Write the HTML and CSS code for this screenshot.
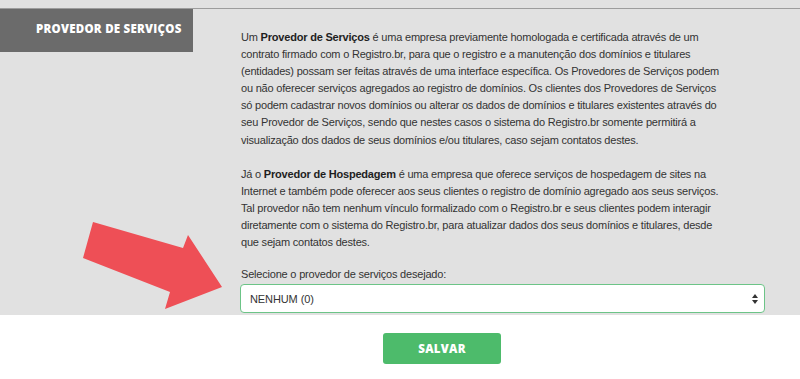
FILE: index.html
```html
<!DOCTYPE html>
<html lang="pt-BR">
<head>
<meta charset="utf-8">
<title>Provedor de Serviços</title>
<link rel="stylesheet" href="styles.css">
</head>
<body>
<div class="panel">
  <div class="panel-inner">
    <div class="tab">PROVEDOR DE SERVIÇOS</div>
    <div class="content">
      <p>Um <b>Provedor de Serviços</b> é uma empresa previamente homologada e certificada através de um contrato firmado com o Registro.br, para que o registro e a manutenção dos domínios e titulares (entidades) possam ser feitas através de uma interface específica. Os Provedores de Serviços podem ou não oferecer serviços agregados ao registro de domínios. Os clientes dos Provedores de Serviços só podem cadastrar novos domínios ou alterar os dados de domínios e titulares existentes através do seu Provedor de Serviços, sendo que nestes casos o sistema do Registro.br somente permitirá a visualização dos dados de seus domínios e/ou titulares, caso sejam contatos destes.</p>
      <p>Já o <b>Provedor de Hospedagem</b> é uma empresa que oferece serviços de hospedagem de sites na Internet e também pode oferecer aos seus clientes o registro de domínio agregado aos seus serviços. Tal provedor não tem nenhum vínculo formalizado com o Registro.br e seus clientes podem interagir diretamente com o sistema do Registro.br, para atualizar dados dos seus domínios e titulares, desde que sejam contatos destes.</p>
      <div class="label">Selecione o provedor de serviços desejado:</div>
      <div class="select">
        <span>NENHUM (0)</span>
        <svg class="caret" width="6" height="10" viewBox="0 0 6 10"><polygon points="3,0 6,4 0,4" fill="#333"/><polygon points="0,6 6,6 3,10" fill="#333"/></svg>
      </div>
    </div>
  </div>
  <svg class="arrow" width="145" height="92" viewBox="0 0 145 92"><polygon points="13,2 103,28 108,15 142,67 85,89 90,72 3,38" fill="#ee4f56"/></svg>
</div>
<div class="actions"><button class="btn">SALVAR</button></div>
</body>
</html>
```
FILE: styles.css
```css
html, body { margin: 0; padding: 0; background: #fff; }
body { font-family: "Liberation Sans", Arial, sans-serif; color: #333; }
.panel { position: relative; background: #e1e1e1; padding: 8px 0 2px 0; }
.panel-inner { display: flex; align-items: flex-start; border-top: 1px solid #9c9c9c; }
.tab {
  width: 193px; height: 43px; box-sizing: border-box; flex: none;
  background: #6b6b6b; color: #fff;
  font-family: "Open Sans", sans-serif; font-weight: 800; font-size: 11.5px;
  padding: 12px 0 0 36px; line-height: 16px; letter-spacing: 0.25px;
}
.content { margin-left: 47px; width: 525px; padding-top: 20px; }
.content p { margin: 0 0 17px 1px; width: 482px; font-size: 11px; line-height: 17.1px; letter-spacing: -0.2px; }
.content p b { color: #1e1e1e; }
.label { font-size: 11px; letter-spacing: -0.2px; line-height: 17px; margin: -2px 0 1px 1px; }
.select {
  height: 29px; box-sizing: border-box; background: #fff;
  border: 1px solid #6cc487; border-radius: 4px;
  display: flex; align-items: center; justify-content: space-between;
  padding: 0 6px 0 9px; font-size: 11px; letter-spacing: -0.1px; color: #333;
}
.caret { display: block; }
.arrow { position: absolute; left: 80px; top: 220px; }
.actions { padding: 18px 0 0 383px; }
.btn {
  width: 118px; height: 31px; border: none; border-radius: 3px;
  background: #4dbb6b; color: #fff;
  font-family: "Open Sans", sans-serif; font-weight: 800; font-size: 11.5px; letter-spacing: 0.3px;
  padding: 0; margin: 0;
}
```
